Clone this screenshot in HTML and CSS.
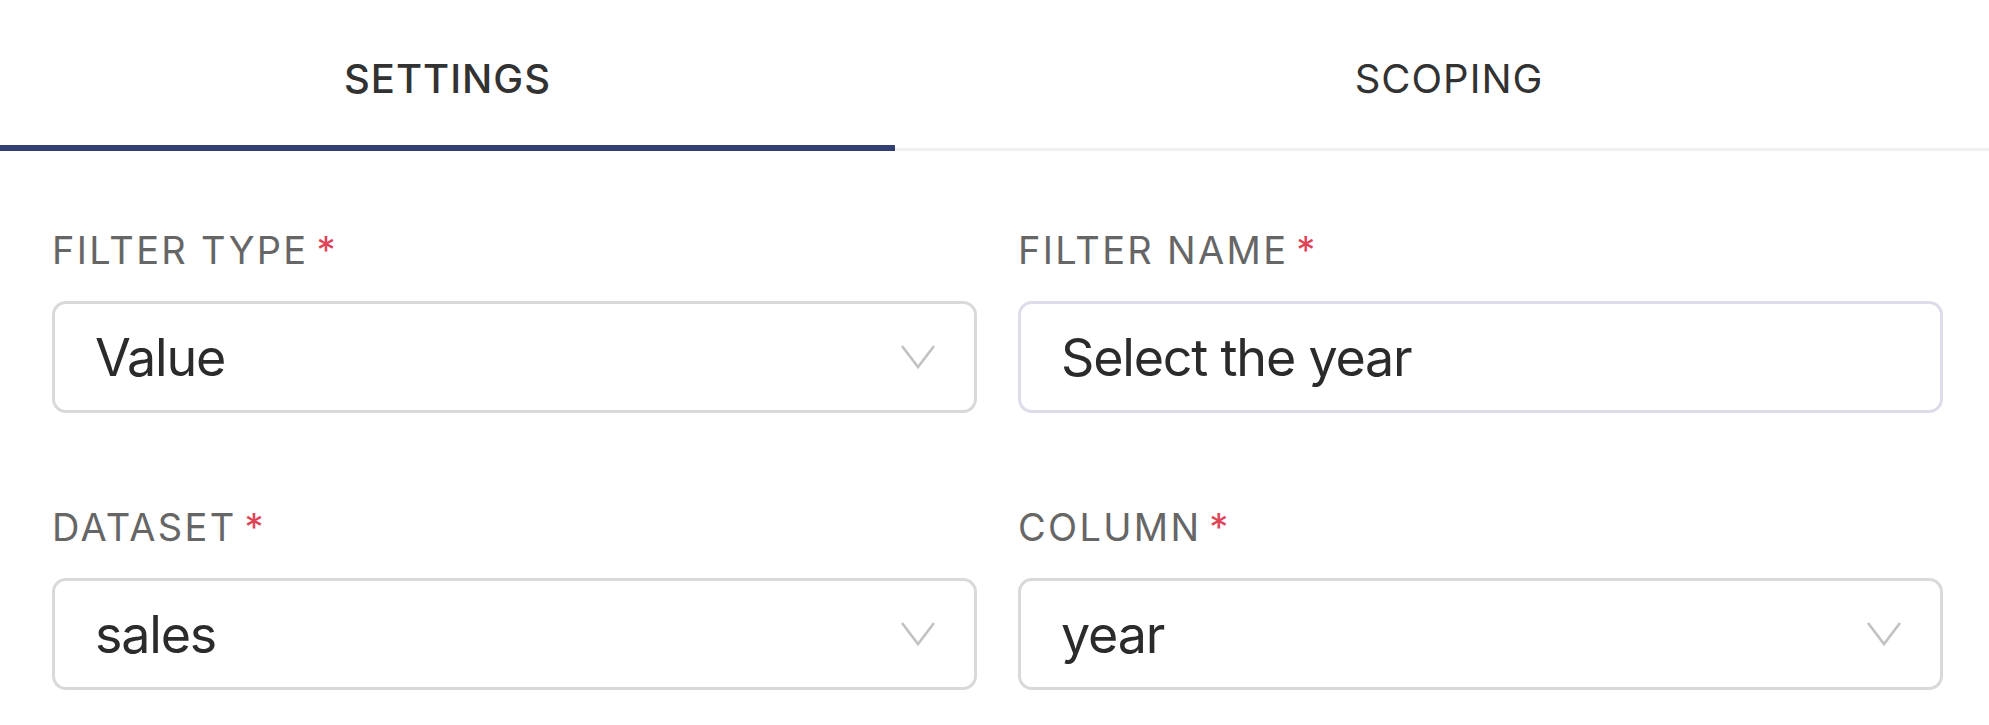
FILE: index.html
```html
<!DOCTYPE html>
<html lang="en">
<head>
<meta charset="utf-8">
<title>Filter settings</title>
<link rel="stylesheet" href="styles.css">
</head>
<body>
<div class="panel">
  <nav class="tabs">
    <div class="tab tab-active">SETTINGS</div>
    <div class="tab tab-second">SCOPING</div>
  </nav>
  <form class="form">
    <div class="field">
      <label class="label required">FILTER TYPE</label>
      <div class="control select">
        <span class="control-text">Value</span>
        <svg class="chevron" viewBox="0 0 36 26" width="36" height="26"><path d="M2 2 L18 23 L34 2" fill="none" stroke="#c2c2c2" stroke-width="2.6"/></svg>
      </div>
    </div>
    <div class="field">
      <label class="label required">FILTER NAME</label>
      <div class="control input">
        <span class="control-text">Select the year</span>
      </div>
    </div>
    <div class="field">
      <label class="label required">DATASET</label>
      <div class="control select">
        <span class="control-text">sales</span>
        <svg class="chevron" viewBox="0 0 36 26" width="36" height="26"><path d="M2 2 L18 23 L34 2" fill="none" stroke="#c2c2c2" stroke-width="2.6"/></svg>
      </div>
    </div>
    <div class="field">
      <label class="label required">COLUMN</label>
      <div class="control select">
        <span class="control-text">year</span>
        <svg class="chevron" viewBox="0 0 36 26" width="36" height="26"><path d="M2 2 L18 23 L34 2" fill="none" stroke="#c2c2c2" stroke-width="2.6"/></svg>
      </div>
    </div>
  </form>
</div>
</body>
</html>
```

FILE: styles.css
```css
html, body {
  margin: 0;
  padding: 0;
  background: #ffffff;
}

body {
  font-family: Inter, "Noto Sans", "Liberation Sans", sans-serif;
  color: #323232;
}

.panel {
  width: 1989px;
}

.tabs {
  display: flex;
  border-bottom: 3px solid #f0f0f0;
  height: 148px;
}

.tab {
  box-sizing: border-box;
  height: 148px;
  padding-top: 55px;
  text-align: center;
  font-size: 40px;
  line-height: 48px;
  color: #323232;
  letter-spacing: 1px;
}

.tab-active {
  width: 895px;
  position: relative;
  font-weight: 500;
}

.tab-active::after {
  content: "";
  position: absolute;
  left: 0;
  right: 0;
  bottom: -3px;
  height: 6px;
  background: #323f73;
}

.tab-second {
  flex: 1;
  font-weight: 400;
  padding-left: 14px;
}

.form {
  display: grid;
  grid-template-columns: 1fr 1fr;
  column-gap: 41px;
  row-gap: 91px;
  padding: 76px 46px 0 52px;
}

.field {
  display: flex;
  flex-direction: column;
  gap: 28px;
}

.label {
  font-size: 38px;
  line-height: 46px;
  color: #666666;
  letter-spacing: 2.3px;
}

.required::after {
  content: "*";
  color: #e04355;
  margin-left: 8px;
  letter-spacing: 0;
}

.control {
  box-sizing: border-box;
  height: 112px;
  border: 3px solid #d9d9d9;
  border-radius: 14px;
  display: flex;
  align-items: center;
  justify-content: space-between;
  padding: 0 38px 0 40px;
}

.input {
  border-color: #dcdde8;
}

.control-text {
  font-size: 52px;
  color: #2b2b2b;
  letter-spacing: -1.2px;
}

.chevron {
  display: block;
}
```
